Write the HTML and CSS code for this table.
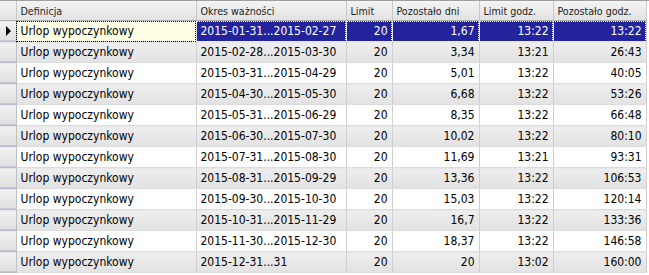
FILE: index.html
```html
<!DOCTYPE html>
<html lang="pl">
<head>
    <meta charset="UTF-8">
    <title>Limity urlopowe</title>
    <link rel="stylesheet" href="styles.css">
</head>
<body>
    <div class="grid">
        <table>
            <colgroup>
                <col class="c-ind">
                <col class="c-def">
                <col class="c-okres">
                <col class="c-limit">
                <col class="c-dni">
                <col class="c-lgodz">
                <col class="c-pgodz">
            </colgroup>
            <thead>
                <tr>
                    <th class="ind"></th>
                    <th>Definicja</th>
                    <th>Okres ważności</th>
                    <th>Limit</th>
                    <th>Pozostało dni</th>
                    <th>Limit godz.</th>
                    <th>Pozostało godz.</th>
                </tr>
            </thead>
            <tbody>
                <tr class="selected">
                    <td class="ind"><span class="arrow"></span></td>
                    <td class="focus">Urlop wypoczynkowy</td>
                    <td>2015-01-31...2015-02-27</td>
                    <td class="num">20</td>
                    <td class="num">1,67</td>
                    <td class="num">13:22</td>
                    <td class="num">13:22</td>
                </tr>
                <tr class="alt">
                    <td class="ind"></td>
                    <td>Urlop wypoczynkowy</td>
                    <td>2015-02-28...2015-03-30</td>
                    <td class="num">20</td>
                    <td class="num">3,34</td>
                    <td class="num">13:21</td>
                    <td class="num">26:43</td>
                </tr>
                <tr>
                    <td class="ind"></td>
                    <td>Urlop wypoczynkowy</td>
                    <td>2015-03-31...2015-04-29</td>
                    <td class="num">20</td>
                    <td class="num">5,01</td>
                    <td class="num">13:22</td>
                    <td class="num">40:05</td>
                </tr>
                <tr class="alt">
                    <td class="ind"></td>
                    <td>Urlop wypoczynkowy</td>
                    <td>2015-04-30...2015-05-30</td>
                    <td class="num">20</td>
                    <td class="num">6,68</td>
                    <td class="num">13:22</td>
                    <td class="num">53:26</td>
                </tr>
                <tr>
                    <td class="ind"></td>
                    <td>Urlop wypoczynkowy</td>
                    <td>2015-05-31...2015-06-29</td>
                    <td class="num">20</td>
                    <td class="num">8,35</td>
                    <td class="num">13:22</td>
                    <td class="num">66:48</td>
                </tr>
                <tr class="alt">
                    <td class="ind"></td>
                    <td>Urlop wypoczynkowy</td>
                    <td>2015-06-30...2015-07-30</td>
                    <td class="num">20</td>
                    <td class="num">10,02</td>
                    <td class="num">13:22</td>
                    <td class="num">80:10</td>
                </tr>
                <tr>
                    <td class="ind"></td>
                    <td>Urlop wypoczynkowy</td>
                    <td>2015-07-31...2015-08-30</td>
                    <td class="num">20</td>
                    <td class="num">11,69</td>
                    <td class="num">13:21</td>
                    <td class="num">93:31</td>
                </tr>
                <tr class="alt">
                    <td class="ind"></td>
                    <td>Urlop wypoczynkowy</td>
                    <td>2015-08-31...2015-09-29</td>
                    <td class="num">20</td>
                    <td class="num">13,36</td>
                    <td class="num">13:22</td>
                    <td class="num">106:53</td>
                </tr>
                <tr>
                    <td class="ind"></td>
                    <td>Urlop wypoczynkowy</td>
                    <td>2015-09-30...2015-10-30</td>
                    <td class="num">20</td>
                    <td class="num">15,03</td>
                    <td class="num">13:22</td>
                    <td class="num">120:14</td>
                </tr>
                <tr class="alt">
                    <td class="ind"></td>
                    <td>Urlop wypoczynkowy</td>
                    <td>2015-10-31...2015-11-29</td>
                    <td class="num">20</td>
                    <td class="num">16,7</td>
                    <td class="num">13:22</td>
                    <td class="num">133:36</td>
                </tr>
                <tr>
                    <td class="ind"></td>
                    <td>Urlop wypoczynkowy</td>
                    <td>2015-11-30...2015-12-30</td>
                    <td class="num">20</td>
                    <td class="num">18,37</td>
                    <td class="num">13:22</td>
                    <td class="num">146:58</td>
                </tr>
                <tr class="alt">
                    <td class="ind"></td>
                    <td>Urlop wypoczynkowy</td>
                    <td>2015-12-31...31</td>
                    <td class="num">20</td>
                    <td class="num">20</td>
                    <td class="num">13:02</td>
                    <td class="num">160:00</td>
                </tr>
            </tbody>
        </table>
    </div>
</body>
</html>
```

FILE: styles.css
```css
body {
    margin: 0;
    background: #f4f4f4;
    font-family: "DejaVu Sans Condensed", "DejaVu Sans", sans-serif;
    color: #000;
}
.grid {
    width: 649px;
    height: 275px;
    overflow: hidden;
    background: #ffffff;
    border-top: 1px solid #a0a0a0;
    box-sizing: border-box;
}
table {
    border-collapse: collapse;
    table-layout: fixed;
    width: 646px;
}
.c-ind { width: 16px; }
.c-def { width: 180px; }
.c-okres { width: 150px; }
.c-limit { width: 46px; }
.c-dni { width: 87px; }
.c-lgodz { width: 74px; }
.c-pgodz { width: 93px; }
th {
    height: 19px;
    padding: 0 4px;
    font-size: 10.6px;
    font-weight: normal;
    text-align: left;
    color: #222;
    background: linear-gradient(#f4f4f4, #e2e2e2);
    border-right: 1px solid #c8c8c8;
    border-bottom: 1px solid #b0b0b0;
    white-space: nowrap;
    overflow: hidden;
}
tbody tr {
    height: 21px;
}
td {
    height: 20px;
    padding: 0 4px;
    font-size: 12px;
    white-space: nowrap;
    overflow: hidden;
    border-right: 1px solid #cfcfcf;
    border-bottom: 1px solid #dcdcdc;
}
td.num {
    text-align: right;
}
tr.alt td {
    background: linear-gradient(#eeeeee, #e2e2e2);
}
td.ind,
tr.alt td.ind {
    padding: 0;
    background: linear-gradient(#f2f2f2, #dedede);
    border-right: 1px solid #c0c0c0;
    border-bottom: 1px solid #b8bccc;
    box-shadow: inset 0 -1px 0 #c4c8d6;
}
th.ind {
    padding: 0;
}
.arrow {
    display: block;
    width: 0;
    height: 0;
    margin-left: 6px;
    border-top: 5px solid transparent;
    border-bottom: 5px solid transparent;
    border-left: 5px solid #000;
}
tr.selected td {
    background: #23239e;
    color: #fff;
    outline: 1px dotted #fff;
    outline-offset: -1px;
}
tr.selected td.focus {
    background: #ffffe6;
    color: #000;
    outline: 1px dotted #000;
}
tr.selected td.ind {
    background: linear-gradient(#f2f2f2, #dedede);
    color: #000;
    outline: none;
}
```
